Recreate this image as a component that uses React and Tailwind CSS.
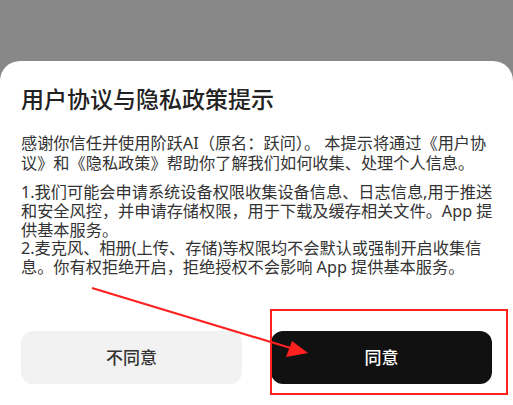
import React from "react";

const font = { fontFamily: '"Noto Sans", "Noto Sans CJK SC", sans-serif' };

export default function App() {
  return (
    <div
      className="relative flex h-[405px] w-[513px] flex-col overflow-hidden bg-[#888888]"
      style={font}
    >
      {/* dialog sheet */}
      <div className="mt-[61px] flex flex-1 flex-col rounded-t-[20px] bg-white px-[21px] pt-[23px]">
        <h1 className="whitespace-nowrap text-[23px] font-medium leading-[30px] text-[#222]">
          用户协议与隐私政策提示
        </h1>

        <p className="mt-[19px] whitespace-nowrap text-[16.2px] leading-[20px] text-[#333]">
          感谢你信任并使用阶跃AI（原名：跃问）。 本提示将通过《用户协
          <br />
          议》和《隐私政策》帮助你了解我们如何收集、处理个人信息。
        </p>

        <p className="mt-[10px] whitespace-nowrap text-[16.2px] leading-[18.8px] text-[#333]">
          1.我们可能会申请系统设备权限收集设备信息、日志信息,用于推送
          <br />
          和安全风控，并申请存储权限，用于下载及缓存相关文件。App 提
          <br />
          供基本服务。
          <br />
          2.麦克风、相册(上传、存储)等权限均不会默认或强制开启收集信
          <br />
          息。你有权拒绝开启，拒绝授权不会影响 App 提供基本服务。
        </p>

        {/* buttons */}
        <div className="mt-[54px] flex gap-[29px]">
          <button className="flex h-[53px] flex-1 items-center justify-center rounded-[12px] bg-[#f2f2f2] text-[17px] font-medium text-[#333]">
            不同意
          </button>
          <button className="flex h-[53px] flex-1 items-center justify-center rounded-[12px] bg-[#111] text-[17px] font-medium text-white">
            同意
          </button>
        </div>
      </div>

      {/* red annotation box */}
      <div className="absolute left-[270px] top-[309px] h-[86px] w-[238px] border-2 border-[#ff2020]" />

      {/* red annotation arrow */}
      <svg
        className="absolute left-0 top-0"
        width="513"
        height="405"
        viewBox="0 0 513 405"
      >
        <line x1="92" y1="288" x2="294" y2="349" stroke="#ff2020" strokeWidth="2.2" />
        <polygon points="308,353 286,357 292,341" fill="#ff2020" />
      </svg>
    </div>
  );
}
